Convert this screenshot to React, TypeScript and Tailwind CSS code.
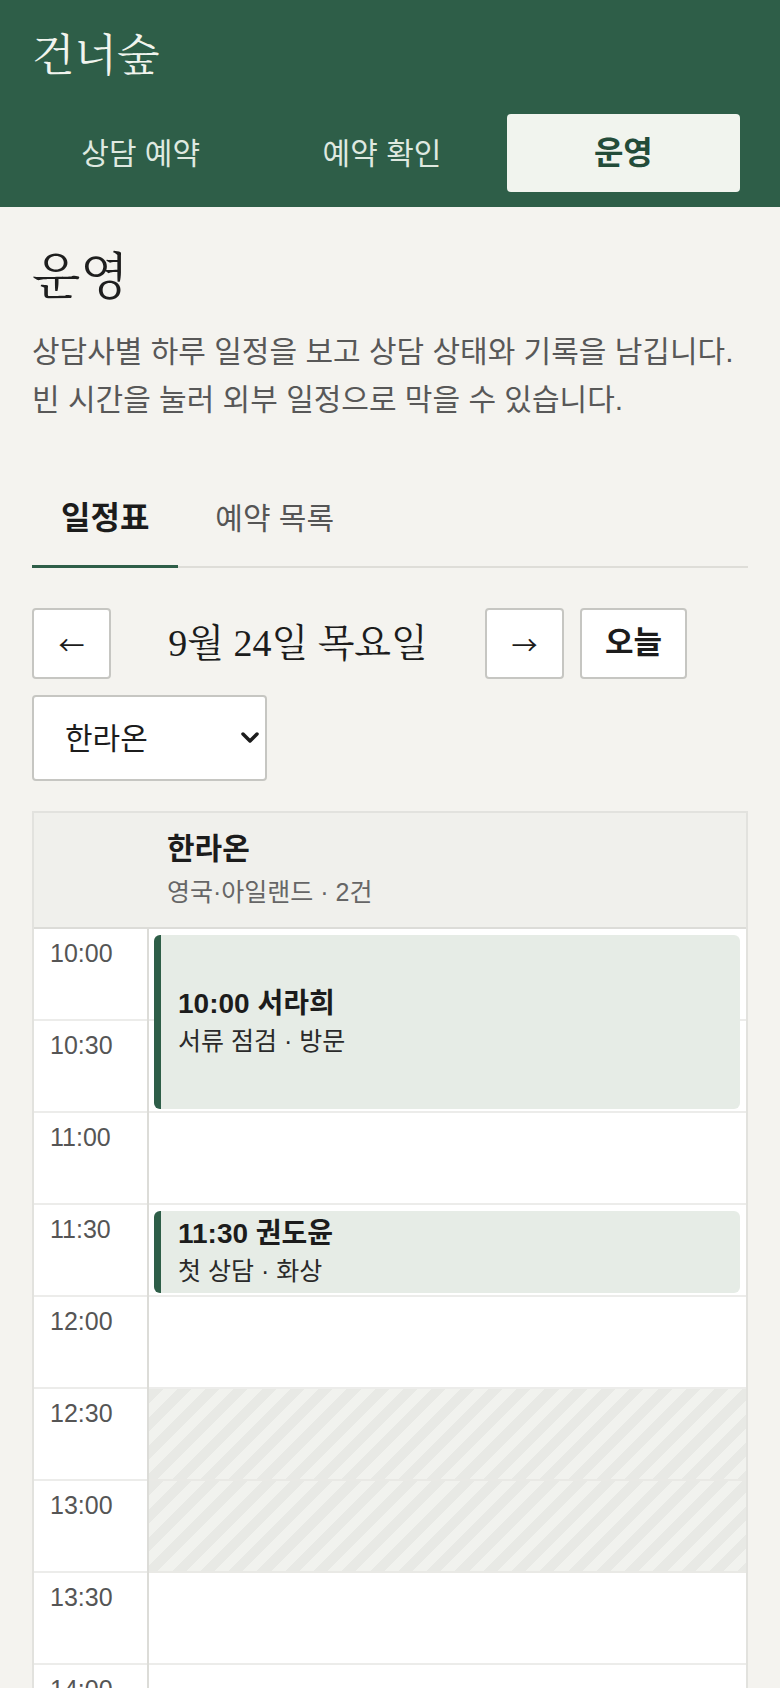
import React from "react";

const sans = "font-['Liberation_Sans','Noto_Sans_CJK_JP','Noto_Sans_CJK_KR',sans-serif]";
const serif = "font-['Liberation_Serif','Noto_Serif_CJK_JP','Noto_Serif_CJK_KR',serif]";

interface Slot {
  time: string;
  blocked?: boolean;
}

interface Booking {
  row: number;
  span: number;
  title: string;
  detail: string;
}

const slots: Slot[] = [
  { time: "10:00" },
  { time: "10:30" },
  { time: "11:00" },
  { time: "11:30" },
  { time: "12:00" },
  { time: "12:30", blocked: true },
  { time: "13:00", blocked: true },
  { time: "13:30" },
  { time: "14:00" },
  { time: "14:30" },
  { time: "15:00" },
];

const bookings: Booking[] = [
  { row: 0, span: 2, title: "10:00 서라희", detail: "서류 점검 · 방문" },
  { row: 3, span: 1, title: "11:30 권도윤", detail: "첫 상담 · 화상" },
];

const ROW = 92;

function Header() {
  return (
    <header className="bg-[#2e5e48]">
      <div className="h-[114px] flex items-center px-8">
        <span className={`${serif} text-[44px] text-[#f1f4ee]`}>건너숲</span>
      </div>
      <nav className="grid grid-cols-3 gap-2 pl-6 pr-10 pb-[15px]">
        <button className="h-[78px] rounded text-[30px] text-[#dfe9e0]">상담 예약</button>
        <button className="h-[78px] rounded text-[30px] text-[#dfe9e0]">예약 확인</button>
        <button className="h-[78px] rounded bg-[#f1f4ee] text-[32px] font-bold text-[#234c39]">
          운영
        </button>
      </nav>
    </header>
  );
}

function Schedule() {
  return (
    <div className="mt-[30px] border-2 border-[#e2e2de] bg-white">
      <div className="grid grid-cols-[113px_1fr] bg-[#f0f0ec] border-b-2 border-[#dcdcd8] h-[116px]">
        <div />
        <div className="pl-5 pt-[14px]">
          <div className="text-[30px] font-bold text-[#1c1c1c] leading-[44px]">한라온</div>
          <div className="text-[25px] text-[#666] leading-[42px]">영국·아일랜드 · 2건</div>
        </div>
      </div>
      <div className="grid grid-cols-[113px_1fr]">
        <div>
          {slots.map((s) => (
            <div
              key={s.time}
              className="h-[92px] border-b-2 border-[#ececea] pl-4 pt-[6px] text-[25px] text-[#555] leading-[36px]"
            >
              {s.time}
            </div>
          ))}
        </div>
        <div className="relative border-l-2 border-[#dcdcd8]">
          {slots.map((s) => (
            <div
              key={s.time}
              className={
                s.blocked
                  ? "h-[92px] border-b-2 border-[#e9e9e5] bg-[repeating-linear-gradient(135deg,#e8e9e5_0px,#e8e9e5_10px,#f1f2ee_10px,#f1f2ee_20px)]"
                  : "h-[92px] border-b-2 border-[#ececea]"
              }
            />
          ))}
          {bookings.map((b) => (
            <div
              key={b.title}
              className="absolute left-[5px] right-1.5 flex flex-col justify-center rounded-md border-l-[7px] border-[#2e5e48] bg-[#e6ece6] pl-[17px]"
              style={{ top: b.row * ROW + 6, height: b.span * ROW - 10 }}
            >
              <div className="text-[28px] font-bold text-[#1c1c1c] leading-[38px]">{b.title}</div>
              <div className="text-[25px] text-[#2a2a2a] leading-[36px]">{b.detail}</div>
            </div>
          ))}
        </div>
      </div>
    </div>
  );
}

export default function App() {
  return (
    <div className={`min-h-screen bg-[#f4f3ef] ${sans}`}>
      <Header />
      <main className="px-8 pb-10">
        <h1 className={`${serif} mt-[40px] text-[50px] leading-[60px] text-[#1e1e1e]`}>운영</h1>
        <p className="mt-[21px] text-[30px] leading-[48px] text-[#585858]">
          상담사별 하루 일정을 보고 상담 상태와 기록을 남깁니다.
          <br />
          빈 시간을 눌러 외부 일정으로 막을 수 있습니다.
        </p>

        <div className="mt-12 flex gap-2 border-b-2 border-[#deddd8]">
          <button className="-mb-[2px] border-b-[3px] border-[#2e5e48] px-[29px] pt-[26px] pb-[27px] text-[32px] font-bold leading-[40px] text-[#1c1c1c]">
            일정표
          </button>
          <button className="px-[29px] pt-[26px] pb-[27px] text-[30px] leading-[40px] text-[#555]">
            예약 목록
          </button>
        </div>

        <div className="mt-[40px] flex flex-wrap items-center gap-x-4 gap-y-4">
          <button className="h-[71px] w-[79px] rounded border-2 border-[#c6c6c2] bg-white font-['Noto_Sans_CJK_JP',sans-serif] text-[26px] text-[#1c1c1c]">
            ←
          </button>
          <div className={`${serif} w-[342px] text-center text-[38px] text-[#1c1c1c]`}>
            9월 24일 목요일
          </div>
          <button className="h-[71px] w-[79px] rounded border-2 border-[#c6c6c2] bg-white font-['Noto_Sans_CJK_JP',sans-serif] text-[26px] text-[#1c1c1c]">
            →
          </button>
          <button className="h-[71px] w-[107px] rounded border-2 border-[#c6c6c2] bg-white text-[31px] font-bold text-[#1c1c1c]">
            오늘
          </button>
          <div className="relative h-[86px] w-[235px] rounded border-2 border-[#c6c6c2] bg-white">
            <span className="absolute left-[31px] top-1/2 -translate-y-1/2 text-[30px] text-[#1c1c1c]">
              한라온
            </span>
            <svg
              className="absolute right-[5px] top-1/2 -translate-y-1/2"
              width="20"
              height="14"
              viewBox="0 0 20 14"
              fill="none"
              stroke="#1c1c1c"
              strokeWidth="3.5"
              strokeLinecap="round"
              strokeLinejoin="round"
            >
              <path d="M3 3l7 7 7-7" />
            </svg>
          </div>
        </div>

        <Schedule />
      </main>
    </div>
  );
}
